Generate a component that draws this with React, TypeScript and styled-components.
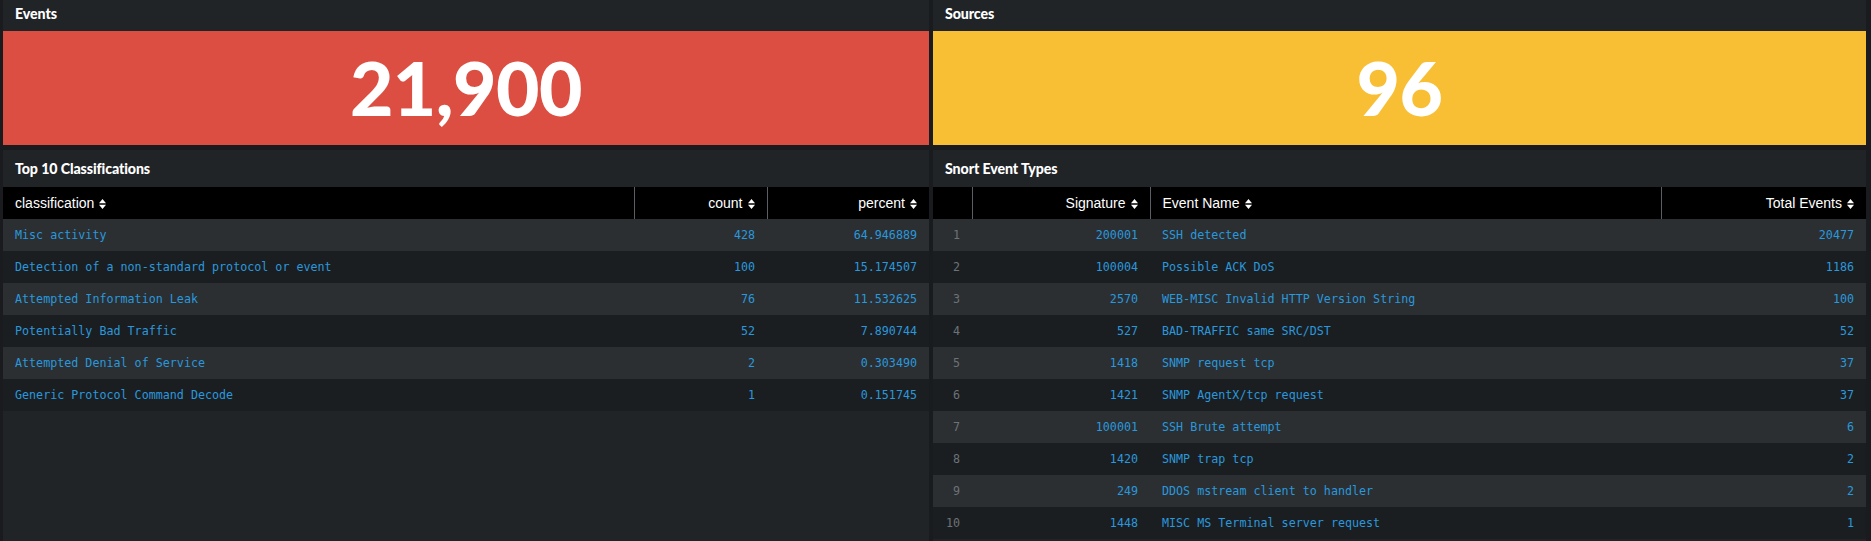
import React from "react";
import styled, { createGlobalStyle } from "styled-components";

const GlobalStyle = createGlobalStyle`
  html, body { margin: 0; padding: 0; background: #191b1f; }
  * { box-sizing: border-box; }
`;

const Page = styled.div`
  display: grid;
  grid-template-columns: 926px 1fr;
  grid-template-rows: 145px 1fr;
  column-gap: 4px;
  row-gap: 5px;
  padding: 0 5px 0 3px;
  height: 541px;
  overflow: hidden;
  font-family: "Lato", "Liberation Sans", sans-serif;
`;

const Panel = styled.section`
  background: #212427;
  display: flex;
  flex-direction: column;
  min-width: 0;
  overflow: hidden;
`;

const PanelTitle = styled.h2<{ $tall?: boolean }>`
  margin: 0;
  flex: none;
  height: ${(p) => (p.$tall ? "37px" : "31px")};
  padding: ${(p) => (p.$tall ? "0 12px" : "4px 12px 0")};
  line-height: ${(p) => (p.$tall ? "37px" : "20px")};
  font-size: 14.2px;
  font-weight: 900;
  color: #ffffff;
  letter-spacing: -0.1px;
`;

const SingleValue = styled.div<{ $bg: string }>`
  flex: 1;
  background: ${(p) => p.$bg};
  display: flex;
  align-items: center;
  justify-content: center;
  color: #ffffff;
  font-family: "Lato", "Liberation Sans", sans-serif;
  font-weight: 900;
  font-size: 75px;
  letter-spacing: -0.5px;
  padding-bottom: 2px;
`;

const Table = styled.table`
  width: 100%;
  border-collapse: collapse;
  table-layout: fixed;
`;

const HeadCell = styled.th<{ $align?: "left" | "right"; $divider?: boolean }>`
  background: #000000;
  height: 32px;
  padding: 0 12px;
  text-align: ${(p) => p.$align ?? "left"};
  font-family: "Liberation Sans", "Roboto", sans-serif;
  font-weight: 400;
  font-size: 14px;
  color: #ffffff;
  white-space: nowrap;
  border-left: ${(p) => (p.$divider ? "1px solid #5a5f65" : "none")};
`;

const Row = styled.tr<{ $odd: boolean }>`
  background: ${(p) => (p.$odd ? "#2b2f32" : "#1b1e21")};
`;

const Cell = styled.td<{ $align?: "left" | "right"; $muted?: boolean }>`
  height: 32px;
  padding: 0 12px;
  text-align: ${(p) => p.$align ?? "left"};
  font-family: "DejaVu Sans Mono", "Liberation Mono", monospace;
  font-size: 11.7px;
  color: ${(p) => (p.$muted ? "#6c7378" : "#2a98dc")};
  white-space: nowrap;
  overflow: hidden;
`;

const SortIconWrap = styled.span`
  display: inline-block;
  margin-left: 5px;
  vertical-align: -1px;
`;

const SortIcon = () => (
  <SortIconWrap>
    <svg width="7" height="10" viewBox="0 0 7 10">
      <polygon points="0,4.2 3.5,0 7,4.2" fill="#ffffff" />
      <polygon points="0,5.8 3.5,10 7,5.8" fill="#ffffff" />
    </svg>
  </SortIconWrap>
);

const classifications: [string, string, string][] = [
  ["Misc activity", "428", "64.946889"],
  ["Detection of a non-standard protocol or event", "100", "15.174507"],
  ["Attempted Information Leak", "76", "11.532625"],
  ["Potentially Bad Traffic", "52", "7.890744"],
  ["Attempted Denial of Service", "2", "0.303490"],
  ["Generic Protocol Command Decode", "1", "0.151745"],
];

const events: [string, string, string][] = [
  ["200001", "SSH detected", "20477"],
  ["100004", "Possible ACK DoS", "1186"],
  ["2570", "WEB-MISC Invalid HTTP Version String", "100"],
  ["527", "BAD-TRAFFIC same SRC/DST", "52"],
  ["1418", "SNMP request tcp", "37"],
  ["1421", "SNMP AgentX/tcp request", "37"],
  ["100001", "SSH Brute attempt", "6"],
  ["1420", "SNMP trap tcp", "2"],
  ["249", "DDOS mstream client to handler", "2"],
  ["1448", "MISC MS Terminal server request", "1"],
];

export default function App() {
  return (
    <>
      <GlobalStyle />
      <Page>
        <Panel>
          <PanelTitle>Events</PanelTitle>
          <SingleValue $bg="#dc4e41">21,900</SingleValue>
        </Panel>
        <Panel>
          <PanelTitle>Sources</PanelTitle>
          <SingleValue $bg="#f8be34">96</SingleValue>
        </Panel>

        <Panel>
          <PanelTitle $tall>Top 10 Classifications</PanelTitle>
          <Table>
            <colgroup>
              <col style={{ width: 631 }} />
              <col style={{ width: 133 }} />
              <col />
            </colgroup>
            <thead>
              <tr>
                <HeadCell>
                  classification
                  <SortIcon />
                </HeadCell>
                <HeadCell $align="right" $divider>
                  count
                  <SortIcon />
                </HeadCell>
                <HeadCell $align="right" $divider>
                  percent
                  <SortIcon />
                </HeadCell>
              </tr>
            </thead>
            <tbody>
              {classifications.map(([name, count, pct], i) => (
                <Row key={name} $odd={i % 2 === 0}>
                  <Cell>{name}</Cell>
                  <Cell $align="right">{count}</Cell>
                  <Cell $align="right">{pct}</Cell>
                </Row>
              ))}
            </tbody>
          </Table>
        </Panel>

        <Panel>
          <PanelTitle $tall>Snort Event Types</PanelTitle>
          <Table>
            <colgroup>
              <col style={{ width: 39 }} />
              <col style={{ width: 178 }} />
              <col style={{ width: 511 }} />
              <col />
            </colgroup>
            <thead>
              <tr>
                <HeadCell />
                <HeadCell $align="right" $divider>
                  Signature
                  <SortIcon />
                </HeadCell>
                <HeadCell $divider>
                  Event Name
                  <SortIcon />
                </HeadCell>
                <HeadCell $align="right" $divider>
                  Total Events
                  <SortIcon />
                </HeadCell>
              </tr>
            </thead>
            <tbody>
              {events.map(([sig, name, total], i) => (
                <Row key={sig} $odd={i % 2 === 0}>
                  <Cell $align="right" $muted>
                    {i + 1}
                  </Cell>
                  <Cell $align="right">{sig}</Cell>
                  <Cell>{name}</Cell>
                  <Cell $align="right">{total}</Cell>
                </Row>
              ))}
            </tbody>
          </Table>
        </Panel>
      </Page>
    </>
  );
}
